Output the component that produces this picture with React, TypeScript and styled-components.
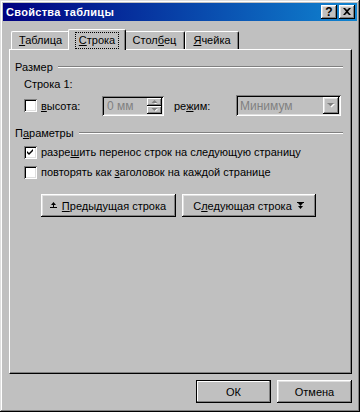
import React from 'react';
import styled, { createGlobalStyle, css } from 'styled-components';

const Global = createGlobalStyle`
  html, body { margin: 0; padding: 0; background: #c0c0c0; }
  body { font-family: "Liberation Sans", Arial, sans-serif; font-size: 11px; color: #000; }
  * { box-sizing: border-box; }
`;

const raised = css`
  box-shadow: inset -1px -1px #000, inset 1px 1px #fff, inset -2px -2px #808080, inset 2px 2px #dfdfdf;
`;
const sunken = css`
  box-shadow: inset 1px 1px #808080, inset -1px -1px #fff, inset 2px 2px #000, inset -2px -2px #dfdfdf;
`;

const Window = styled.div`
  width: 360px;
  height: 412px;
  background: #c0c0c0;
  padding: 3px;
  display: flex;
  flex-direction: column;
  box-shadow: inset -1px -1px #000, inset 1px 1px #dfdfdf, inset -2px -2px #808080, inset 2px 2px #fff;
`;

const TitleBar = styled.div`
  height: 18px;
  flex: none;
  display: flex;
  align-items: center;
  padding: 0 2px 0 3px;
  background: linear-gradient(to right, #000080, #1084d0);
`;

const TitleText = styled.div`
  flex: 1;
  color: #fff;
  font-weight: bold;
  font-size: 11px;
  letter-spacing: 0.3px;
`;

const CaptionButtons = styled.div`
  display: flex;
  gap: 2px;
`;

const CaptionButton = styled.div`
  width: 16px;
  height: 14px;
  background: #c0c0c0;
  ${raised};
  display: flex;
  align-items: center;
  justify-content: center;
  font-weight: bold;
  font-size: 12px;
  line-height: 1;
  padding-bottom: 1px;
`;

const Body = styled.div`
  flex: 1;
  display: flex;
  flex-direction: column;
  padding: 8px 5px 0 6px;
`;

const TabStrip = styled.div`
  height: 20px;
  display: flex;
  align-items: flex-end;
  padding-left: 2px;
  position: relative;
  z-index: 1;
`;

const Tab = styled.div<{ $w: number; $active?: boolean }>`
  width: ${p => p.$w}px;
  height: 18px;
  background: #c0c0c0;
  border-left: 1px solid #fff;
  border-top: 1px solid #fff;
  border-right: 1px solid #000;
  border-top-left-radius: 2px;
  border-top-right-radius: 2px;
  box-shadow: inset -1px 0 #808080;
  display: flex;
  justify-content: center;
  align-items: flex-start;
  padding-top: 2px;
  ${p =>
    p.$active &&
    css`
      width: ${p.$w + 4}px;
      height: 21px;
      margin: 0 -2px -1px;
      padding-top: 3px;
      position: relative;
      z-index: 2;
    `}
`;

const Focus = styled.span`
  outline: 1px dotted #000;
  outline-offset: 0;
  padding: 1px 3px 2px;
`;

const U = styled.span`
  text-decoration: underline;
  text-underline-offset: 1px;
`;

const Panel = styled.div`
  flex: 1;
  background: #c0c0c0;
  border-left: 1px solid #fff;
  border-top: 1px solid #fff;
  border-right: 1px solid #000;
  border-bottom: 1px solid #000;
  box-shadow: inset -1px -1px #808080;
  padding: 10px 8px 0 5px;
  display: flex;
  flex-direction: column;
`;

const GroupHeader = styled.div<{ $top?: number }>`
  display: flex;
  align-items: center;
  gap: 5px;
  height: 13px;
  margin-top: ${p => p.$top ?? 0}px;
`;

const EtchedLine = styled.div`
  flex: 1;
  height: 2px;
  border-top: 1px solid #808080;
  border-bottom: 1px solid #fff;
`;

const GroupBody = styled.div`
  padding-left: 9px;
  display: flex;
  flex-direction: column;
`;

const Text = styled.div<{ $top?: number }>`
  line-height: 13px;
  margin-top: ${p => p.$top ?? 0}px;
`;

const Row = styled.div<{ $top?: number; $h?: number }>`
  display: flex;
  align-items: center;
  height: ${p => p.$h ?? 16}px;
  margin-top: ${p => p.$top ?? 0}px;
`;

const CheckLabel = styled.label<{ $w?: number }>`
  display: flex;
  align-items: center;
  gap: 4px;
  width: ${p => (p.$w ? `${p.$w}px` : 'auto')};
  flex: none;
`;

const CheckBox = styled.span`
  width: 13px;
  height: 13px;
  background: #fff;
  ${sunken};
  display: flex;
  align-items: center;
  justify-content: center;
  flex: none;
`;

const Spin = styled.div`
  width: 62px;
  height: 20px;
  flex: none;
  background: #c0c0c0;
  ${sunken};
  display: flex;
  align-items: center;
  padding: 2px 2px 2px 5px;
`;

const FieldText = styled.span`
  flex: 1;
  color: #808080;
  font-size: 12px;
`;

const SpinButtons = styled.div`
  width: 15px;
  height: 16px;
  display: flex;
  flex-direction: column;
`;

const SpinButton = styled.div`
  flex: 1;
  background: #c0c0c0;
  box-shadow: inset -1px -1px #000, inset 1px 1px #fff, inset -2px -2px #808080;
  display: flex;
  align-items: center;
  justify-content: center;
`;

const ModeLabel = styled.span`
  margin-left: 10px;
  width: 62px;
  flex: none;
`;

const Select = styled.div`
  width: 105px;
  height: 21px;
  flex: none;
  background: #c0c0c0;
  ${sunken};
  display: flex;
  align-items: center;
  padding: 2px 2px 2px 4px;
`;

const DropButton = styled.div`
  width: 16px;
  height: 17px;
  background: #c0c0c0;
  ${raised};
  display: flex;
  align-items: center;
  justify-content: center;
`;

const NavRow = styled.div`
  display: flex;
  justify-content: center;
  gap: 6px;
  margin-top: 14px;
  padding-right: 2px;
`;

const PushButton = styled.button<{ $w: number; $default?: boolean }>`
  width: ${p => p.$w}px;
  height: 23px;
  font: inherit;
  color: #000;
  background: #c0c0c0;
  border: none;
  padding: 0;
  display: flex;
  align-items: center;
  justify-content: center;
  gap: 5px;
  ${raised};
  ${p =>
    p.$default &&
    css`
      border: 1px solid #000;
      box-shadow: inset -1px -1px #808080, inset 1px 1px #fff;
    `}
`;

const Footer = styled.div`
  display: flex;
  justify-content: flex-end;
  gap: 6px;
  padding: 6px 0 6px;
`;

const Check = () => (
  <svg width="7" height="7" viewBox="0 0 7 7">
    <path d="M0 2 L2 4 L6 0 L6 2 L2 6 L0 4 Z" fill="#000" />
  </svg>
);

const CloseGlyph = () => (
  <svg width="8" height="7" viewBox="0 0 8 7">
    <path d="M0 0h2l2 2 2-2h2L5 3.5 8 7H6L4 5 2 7H0l3-3.5Z" fill="#000" />
  </svg>
);

const Tri = ({ up }: { up?: boolean }) => (
  <svg width="7" height="4" viewBox="0 0 7 4">
    <path d={up ? 'M1 4h5L3.5 1.5Z' : 'M1 0h5L3.5 2.5Z'} fill="#fff" transform="translate(1 1)" />
    <path d={up ? 'M0 3h6L3 0Z' : 'M0 0h6L3 3Z'} fill="#808080" transform="translate(0.5 0)" />
  </svg>
);

const DropArrow = () => (
  <svg width="8" height="5" viewBox="0 0 8 5">
    <path d="M1 1h7L4.5 4.5Z" fill="#fff" />
    <path d="M0 0h7L3.5 3.5Z" fill="#808080" />
  </svg>
);

const PrevIcon = () => (
  <svg width="7" height="8" viewBox="0 0 7 8">
    <path d="M3.5 0L6 3H1Z" fill="#000" />
    <rect x="3" y="3" width="1" height="2" fill="#000" />
    <rect x="0" y="5" width="7" height="1" fill="#000" />
  </svg>
);

const NextIcon = () => (
  <svg width="7" height="8" viewBox="0 0 7 8">
    <rect x="0" y="0" width="7" height="1" fill="#000" />
    <path d="M1 1h5L3.5 4Z" fill="#000" />
    <path d="M1 4h5L3.5 7Z" fill="#000" />
  </svg>
);

export default function App() {
  return (
    <>
      <Global />
      <Window>
        <TitleBar>
          <TitleText>Свойства таблицы</TitleText>
          <CaptionButtons>
            <CaptionButton>?</CaptionButton>
            <CaptionButton>
              <CloseGlyph />
            </CaptionButton>
          </CaptionButtons>
        </TitleBar>
        <Body>
          <TabStrip>
            <Tab $w={59}>
              <span>
                <U>Т</U>аблица
              </span>
            </Tab>
            <Tab $w={54} $active>
              <Focus>
                <U>С</U>трока
              </Focus>
            </Tab>
            <Tab $w={61}>
              <span>
                Стол<U>б</U>ец
              </span>
            </Tab>
            <Tab $w={54}>
              <span>
                <U>Я</U>чейка
              </span>
            </Tab>
          </TabStrip>
          <Panel>
            <GroupHeader>
              <span>Размер</span>
              <EtchedLine />
            </GroupHeader>
            <GroupBody>
              <Text $top={5}>Строка 1:</Text>
              <Row $top={4} $h={21}>
                <CheckLabel $w={78}>
                  <CheckBox />
                  <span>
                    <U>в</U>ысота:
                  </span>
                </CheckLabel>
                <Spin>
                  <FieldText>0 мм</FieldText>
                  <SpinButtons>
                    <SpinButton>
                      <Tri up />
                    </SpinButton>
                    <SpinButton>
                      <Tri />
                    </SpinButton>
                  </SpinButtons>
                </Spin>
                <ModeLabel>
                  ре<U>ж</U>им:
                </ModeLabel>
                <Select>
                  <FieldText>Минимум</FieldText>
                  <DropButton>
                    <DropArrow />
                  </DropButton>
                </Select>
              </Row>
            </GroupBody>
            <GroupHeader $top={10}>
              <span>
                П<U>а</U>раметры
              </span>
              <EtchedLine />
            </GroupHeader>
            <GroupBody>
              <Row $top={5}>
                <CheckLabel>
                  <CheckBox>
                    <Check />
                  </CheckBox>
                  <span>
                    разре<U>ш</U>ить перенос строк на следующую страницу
                  </span>
                </CheckLabel>
              </Row>
              <Row $top={4}>
                <CheckLabel>
                  <CheckBox />
                  <span>
                    повторять как <U>з</U>аголовок на каждой странице
                  </span>
                </CheckLabel>
              </Row>
            </GroupBody>
            <NavRow>
              <PushButton $w={135}>
                <PrevIcon />
                <span>
                  <U>П</U>редыдущая строка
                </span>
              </PushButton>
              <PushButton $w={134}>
                <span>
                  С<U>л</U>едующая строка
                </span>
                <NextIcon />
              </PushButton>
            </NavRow>
          </Panel>
          <Footer>
            <PushButton $w={75} $default>
              ОК
            </PushButton>
            <PushButton $w={75}>Отмена</PushButton>
          </Footer>
        </Body>
      </Window>
    </>
  );
}
